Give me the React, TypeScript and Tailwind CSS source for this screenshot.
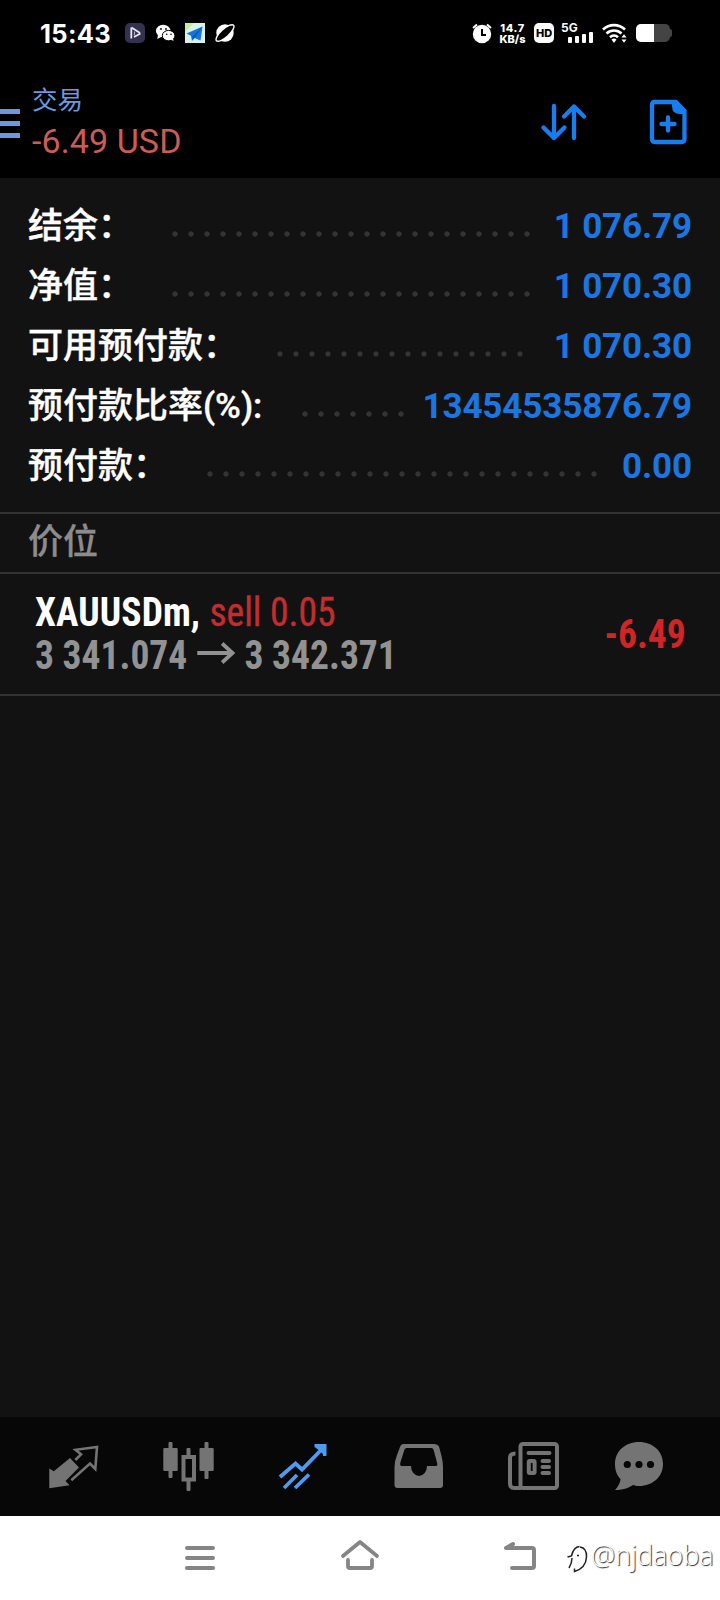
import type { ReactNode } from "react";

const latin = "font-['Roboto','Noto_Sans_CJK_SC',sans-serif]";

function StatusBar() {
  return (
    <div className="flex h-[66px] items-center pl-[40px] text-white">
      <span className="w-[85px] pt-[2px] font-['Inter','Roboto',sans-serif] text-[25.500px] font-bold tracking-[0.3px]">15:43</span>
      <svg className="h-[20px] w-[110px]" viewBox="125 23 110 20">
        <rect x="125" y="23" width="20" height="20" rx="5" fill="#34324e" />
        <path d="M131.300 27.500v11M131.500 27.500l8.500 5.500M134 37l6.500-3.500" stroke="#e8e6f4" strokeWidth="1.800" fill="none" />
        <path d="M134.500 31.500v4" stroke="#b6a2d8" strokeWidth="1.200" />
        <ellipse cx="163.200" cy="31" rx="7.200" ry="6.300" fill="#fff" />
        <path d="M158 35l-.8 4 4-2z" fill="#fff" />
        <ellipse cx="168.600" cy="35.600" rx="6.300" ry="5.200" fill="#fff" stroke="#000" strokeWidth="1" />
        <path d="M170 39l3.500 2-.6-4z" fill="#fff" />
        <g fill="#000"><circle cx="161" cy="29" r=".9" /><circle cx="166" cy="29" r=".9" /><circle cx="166.700" cy="34.300" r=".8" /><circle cx="171" cy="34.300" r=".8" /></g>
        <rect x="185" y="23" width="20" height="20" fill="#d8f2ee" />
        <path d="M185 23h9l-9 9z" fill="#c4eca2" />
        <path d="M186.500 33.500L202.500 26.500 200.500 40.500 194.500 38 192 41 191 35.800z" fill="#1674df" />
        <path d="M192.500 36.500l10-10-8 11.500-2 2z" fill="#0a56c0" />
        <circle cx="225" cy="33" r="8.700" fill="#fff" />
        <ellipse cx="225" cy="33" rx="11.500" ry="4" transform="rotate(-42 225 33)" fill="#000" stroke="#fff" strokeWidth="1.400" />
      </svg>
      <svg className="ml-[237px] h-[22px] w-[20px]" viewBox="472 22 20 22">
        <circle cx="482" cy="34" r="9.200" fill="#fff" />
        <path d="M473 28l4-3.500M491 28l-4-3.500" stroke="#fff" strokeWidth="2" />
        <path d="M482 29v6h4" stroke="#000" strokeWidth="2" fill="none" />
      </svg>
      <div className="ml-[6px] w-[29px] pt-[1px] text-center font-['Inter','Roboto',sans-serif] text-[11px] leading-[11px] font-extrabold">
        <div className="tracking-[0.6px]">14.7</div>
        <div className="whitespace-nowrap">KB/s</div>
      </div>
      <span className="ml-[7px] flex h-[20px] w-[20px] items-center justify-center rounded-[5px] bg-white font-['Inter','Roboto',sans-serif] text-[11px] font-extrabold text-black">HD</span>
      <div className="ml-[7px] h-[20px] w-[32px]">
        <div className="font-['Inter','Roboto',sans-serif] text-[12px] leading-[10px] font-bold">5G</div>
        <div className="flex h-[10px] items-end justify-end gap-[3px]">
          <i className="h-[6px] w-[4px] rounded-[1px] bg-white" />
          <i className="h-[7px] w-[4px] rounded-[1px] bg-white" />
          <i className="h-[9px] w-[4px] rounded-[1px] bg-white" />
          <i className="h-[11px] w-[4px] shrink-0 rounded-[1px] bg-white" />
        </div>
      </div>
      <svg className="ml-[9px] h-[20px] w-[26px]" viewBox="602 23 26 20" fill="none" stroke="#fff" strokeWidth="2.600">
        <path d="M603 29.500a16 16 0 0 1 22 0M606.500 33.500a11 11 0 0 1 15 0M610 37.200a6 6 0 0 1 8 0" />
        <path d="M611.500 39.500a4 4 0 0 1 5 0L614 43z" fill="#fff" stroke="none" />
        <path d="M621.500 37.500l2.500-3.200 2.500 3.200zM621.500 39.500l2.500 3.200 2.500-3.200z" fill="#fff" stroke="none" />
      </svg>
      <div className="ml-[8px] flex items-center">
        <div className="flex h-[18px] w-[34px] overflow-hidden rounded-[5px] bg-[#444]"><div className="w-[18px] bg-white" /></div>
        <div className="h-[8px] w-[2px] rounded-r-[2px] bg-[#444]" />
      </div>
    </div>
  );
}

function Header() {
  return (
    <header className="flex h-[112px]">
      <div className="mt-[43px] flex w-[32px] flex-col gap-[7px]">
        <i className="h-[5px] w-[20px] bg-[#6c98e0]" />
        <i className="h-[5px] w-[20px] bg-[#6c98e0]" />
        <i className="h-[5px] w-[20px] bg-[#6c98e0]" />
      </div>
      <div className={"flex w-[508px] flex-col pt-[17px] " + latin}>
        <div className="h-[37px] font-['Noto_Sans_CJK_SC',sans-serif] text-[25.500px] leading-[30px] text-[#6c98e0]">交易</div>
        <div className="text-[34px] leading-[42px] tracking-[0.1px] whitespace-nowrap text-[#cc5c55]">-6.49 USD</div>
      </div>
      <svg className="mt-[36px] h-[40px] w-[48px]" viewBox="540 102 48 40" fill="none" stroke="#187ef0" strokeWidth="4.300" strokeLinecap="round" strokeLinejoin="round">
        <path d="M554 106v32M543.500 127.500l10.500 10.500 10.500-10.500M574 138v-31.500M564 116.500l10-10 10 10" />
      </svg>
      <svg className="mt-[32px] ml-[60px] h-[48px] w-[42px]" viewBox="648 98 42 48" fill="none" stroke="#187ef0" strokeWidth="4.300" strokeLinejoin="round">
        <path d="M654 102h22l8.500 9v28q0 3-3 3H655q-3 0-3-3v-34q0-3 3-3z" />
        <path d="M672 102h5l8 9v3h-5q-8 0-8-8z" fill="#187ef0" stroke="none" />
        <path d="M668 117.500v13M661.500 124h13" strokeLinecap="round" />
      </svg>
    </header>
  );
}

function SummaryRow({ label, dots, value }: { label: string; dots: string; value: string }) {
  return (
    <div className="flex h-[60px] items-center">
      <div className="mt-[3px] flex-1 text-[35px] leading-[52px] font-medium whitespace-nowrap text-white [-webkit-text-stroke:0.4px_white]">{label}</div>
      <div className={"mt-[18px] h-[6px] bg-[radial-gradient(circle,#343434_2.2px,transparent_3px)] bg-[length:16px_6px] " + dots} />
      <div className="pt-[5px] text-right text-[35px] font-bold tracking-[-0.12px] whitespace-nowrap text-[#1b76e2]">{value}</div>
    </div>
  );
}

function TabIcon({ x, className = "", children }: { x: number; className?: string; children: ReactNode }) {
  return (
    <svg className={"h-[64px] w-[64px] shrink-0 overflow-visible " + className} viewBox={`${x} 1434 64 64`} fill="none">
      {children}
    </svg>
  );
}

export default function App() {
  return (
    <div className={"flex h-[1600px] w-[720px] flex-col overflow-hidden bg-[#121212] " + latin}>
      <div className="bg-black">
        <StatusBar />
        <Header />
      </div>

      <section className="flex h-[334px] flex-col pt-[17px] pr-[28px] pl-[28px]">
        <SummaryRow label="结余：" dots="w-[368px] mr-[19px]" value="1 076.79" />
        <SummaryRow label="净值：" dots="w-[368px] mr-[19px]" value="1 070.30" />
        <SummaryRow label="可用预付款：" dots="w-[256px] mr-[26px]" value="1 070.30" />
        <SummaryRow label="预付款比率(%):" dots="w-[112px] mr-[13px]" value="13454535876.79" />
        <SummaryRow label="预付款：" dots="w-[400px] mr-[20px]" value="0.00" />
      </section>

      <div className="flex h-[60px] items-center border-t-2 border-[#323232] px-[28px] text-[35px] leading-[50px] font-medium text-[#8c8c8c] [-webkit-text-stroke:0.3px_#8c8c8c]">价位</div>

      <div className="flex h-[124px] items-center justify-between border-y-2 border-[#323232] pr-[34px] pl-[35px] font-['Roboto_Condensed','Roboto',sans-serif] text-[40px] leading-[43px] [font-stretch:condensed]">
        <div className="origin-left scale-x-[0.938]">
          <div className="flex whitespace-nowrap">
            <span className="font-bold tracking-[0.1px] text-white">XAUUSDm,</span>
            <span className="ml-[10px] text-[#c42d2f] [-webkit-text-stroke:0.4px_#c42d2f]">sell 0.05</span>
          </div>
          <div className="flex items-center font-bold whitespace-nowrap text-[#929292]">
            <span>3 341.074</span>
            <svg className="mr-[9px] ml-[10px] -mt-[5px] h-[24px] w-[42px]" viewBox="0 0 42 24" fill="none" stroke="#929292" strokeWidth="4"><path d="M1 12h38M27.500 2.500l11 9.500-11 9.500" /></svg>
            <span>3 342.371</span>
          </div>
        </div>
        <div className="origin-right scale-x-[0.938] font-bold text-[#d22427]">-6.49</div>
      </div>

      <main className="flex-1" />

      <nav className="flex h-[99px] items-start bg-[#070707] pt-[17px] pl-[41px]">
        <TabIcon x={41}>
          <path d="M49.300 1468.500l4.500 2.700 16.200-13.200 9 9.500-13.500 13.500 4 4.300-20.200 3z" fill="#747474" />
          <path d="M75.300 1460l5.700-5.700-5.500-4.500 21.500-2.800-1.700 22-5.300-5.500-18.700 16.700" stroke="#747474" strokeWidth="2.600" />
        </TabIcon>
        <TabIcon x={156} className="ml-[51px]">
          <g fill="#747474">
            <rect x="163.300" y="1448" width="14.400" height="23" rx="1" /><rect x="168.500" y="1442" width="4" height="36" rx="1" />
            <rect x="199.500" y="1448" width="14.200" height="23" rx="1" /><rect x="204.500" y="1442" width="4" height="37" rx="1" />
            <rect x="186.500" y="1448" width="4" height="8" rx="1" /><rect x="186.500" y="1480" width="4" height="11" rx="1" />
          </g>
          <rect x="183.500" y="1457" width="10.500" height="22.500" stroke="#747474" strokeWidth="4" />
        </TabIcon>
        <TabIcon x={271} className="ml-[51px]">
          <g stroke="#4e9bf0" strokeWidth="3.800">
            <path d="M280 1477l15.500-13.500 6.500 6 22.500-23" />
            <path d="M284 1488l13-13M295 1488l14-13.500" />
          </g>
          <path d="M314.500 1444h12v12h-3.500v-2l-7.500-6.500h-1z" fill="#4e9bf0" />
        </TabIcon>
        <TabIcon x={386} className="ml-[51px]">
          <path fillRule="evenodd" d="M403.500 1444h31q3 0 4.500 2.500l2.500 9.500q1.500 6 1.500 11v18q0 3-3 3h-42.500q-3 0-3-3v-18q0-6 2.500-12l3-8q1-3 3.500-3zM406.500 1448q-1.500 0-2 1.500l-4 12.500q-1 4 1 4h9.500a8 10 0 0 0 16 0h9q2 0 1-3.500l-3.500-13q-.5-1.500-2-1.500z" fill="#747474" />
        </TabIcon>
        <TabIcon x={501} className="ml-[51px]">
          <g stroke="#747474" strokeWidth="4">
            <rect x="520.500" y="1444" width="36.500" height="44" rx="2.500" />
            <path d="M515.500 1453.500q-5.500 0-5.500 4v26q0 4.500 4 4.500h7" />
            <path d="M528.500 1453h21M542.500 1461h6.500M542.500 1467h6.500M542.500 1473h6.500" strokeLinecap="round" />
            <rect x="528.800" y="1461" width="5.800" height="12" rx="1" />
          </g>
        </TabIcon>
        <TabIcon x={612} className="ml-[47px]">
          <path d="M639 1442c14 0 24 9.500 24 22s-10 22-24 22c-3 0-4-.5-6-1-4 3-11 5-18 5 3-3 5.500-8 5.500-11-4-4-5.500-9-5.500-15 0-12.500 10-22 24-22z" fill="#747474" />
          <g fill="#070707"><circle cx="627.300" cy="1464.500" r="3.600" /><circle cx="639" cy="1464.500" r="3.600" /><circle cx="650.500" cy="1464.500" r="3.600" /></g>
        </TabIcon>
      </nav>

      <footer className="flex h-[84px] bg-white pl-[184px]">
        <svg className="mt-[28px] h-[28px] w-[32px]" viewBox="184 1544 32 28" stroke="#858585" strokeWidth="4" strokeLinecap="round"><path d="M187 1548h26M187 1558h26M187 1568h26" /></svg>
        <svg className="mt-[22px] ml-[124px] h-[34px] w-[40px]" viewBox="340 1538 40 34" fill="none" stroke="#858585" strokeWidth="3.800" strokeLinecap="round" strokeLinejoin="round"><path d="M343 1556l17-14 17 14M348 1560v6q0 2 2 2h20q2 0 2-2v-6" /></svg>
        <svg className="mt-[22px] ml-[122px] h-[34px] w-[36px]" viewBox="502 1538 36 34" fill="none" stroke="#858585" strokeWidth="4" strokeLinecap="round" strokeLinejoin="round"><path d="M513 1544l-7 4h26q2 0 2 2v16q0 2-2 2h-20" /></svg>
        <svg className="mt-[28px] ml-[27px] h-[30px] w-[26px]" viewBox="565 1544 26 30" fill="none" stroke="#222" strokeWidth="1.500"><path d="M567.500 1557l4-1q2-9 8-9.500M580 1547q7 1 6.500 10-.5 11-12 14.500v-3M572 1558q0 5-3 10M577 1555.500h2" /></svg>
        <div className="mt-[21px] font-['Open_Sans','Noto_Sans',sans-serif] text-[27px] leading-[36px] font-light whitespace-nowrap text-white [text-shadow:1px_1px_1px_#222]">@njdaoba</div>
      </footer>
    </div>
  );
}
